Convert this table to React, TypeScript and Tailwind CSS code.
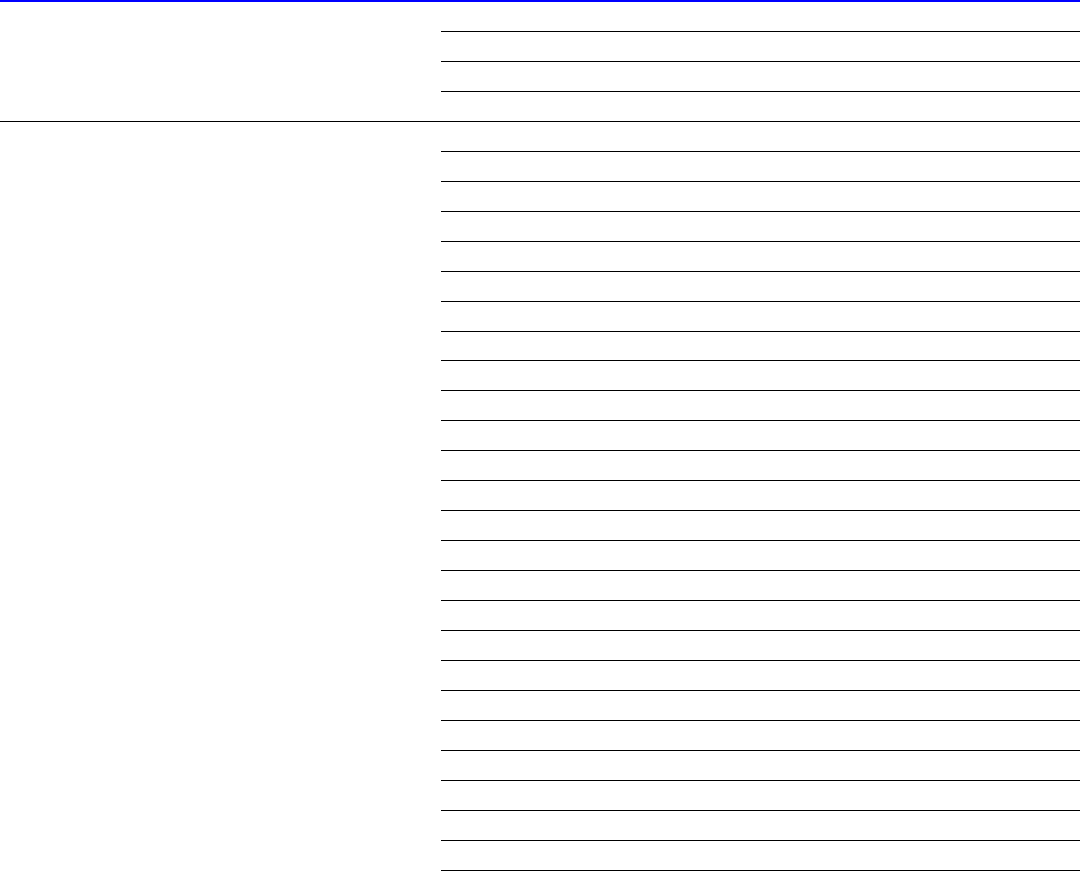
import React from 'react';

const Rows = ({ count }: { count: number }) => (
  <div className="flex flex-col">
    {Array.from({ length: count }).map((_, i) => (
      <div key={i} className="h-[29.96px] border-b border-black" />
    ))}
  </div>
);

export default function App() {
  return (
    <div className="min-h-screen bg-white border-t-2 border-[#0000ff]" style={{ fontFamily: '"Liberation Sans", sans-serif' }}>
      <div className="flex h-[119.84px] border-b border-black">
        <div className="w-[441px] shrink-0" />
        <div className="flex-1">
          <Rows count={3} />
        </div>
      </div>
      <div className="flex">
        <div className="w-[441px] shrink-0" />
        <div className="flex-1">
          <Rows count={26} />
        </div>
      </div>
    </div>
  );
}
